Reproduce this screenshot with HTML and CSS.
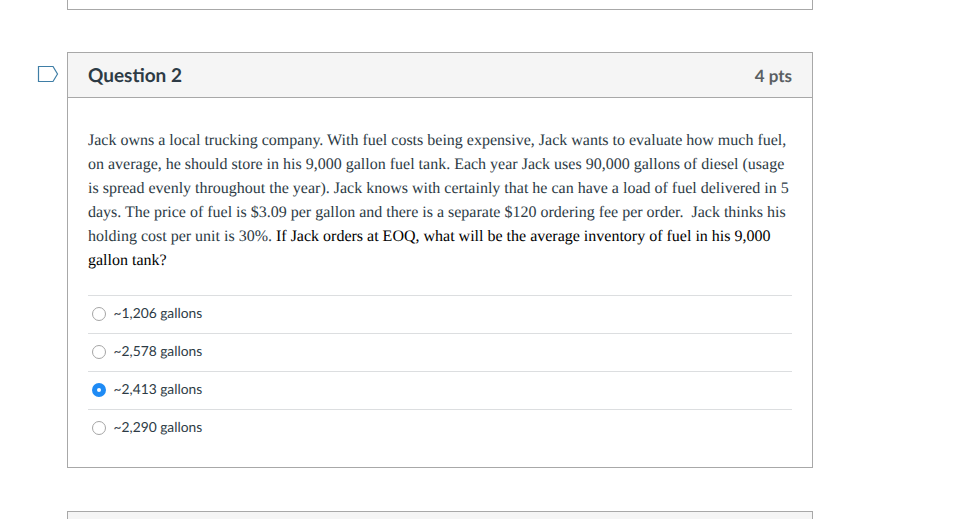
FILE: index.html
```html
<!DOCTYPE html>
<html lang="en">
<head>
  <meta charset="UTF-8" />
  <title>Quiz</title>
  <link rel="stylesheet" href="styles.css">
</head>
<body>
  <div class="quiz">
    <div class="question-row">
      <div class="flag-col"></div>
      <div class="card card-prev"></div>
    </div>

    <div class="question-row">
      <div class="flag-col">
        <svg class="flag" width="22" height="17" viewBox="0 0 22 17">
          <path d="M1.5 .5H16L20.5 8L16 15.5H1.5Z" fill="none" stroke="#3f7ea6" stroke-width="1.2"/>
        </svg>
      </div>
      <div class="card">
        <div class="card-header">
          <h2>Question 2</h2>
          <span class="points">4 pts</span>
        </div>
        <div class="card-body">
          <p class="question-text">Jack owns a local trucking company. With fuel costs being expensive, Jack wants to evaluate how much fuel, on average, he should store in his 9,000 gallon fuel tank. Each year Jack uses 90,000 gallons of diesel (usage is spread evenly throughout the year). Jack knows with certainly that he can have a load of fuel delivered in 5 days. The price of fuel is $3.09 per gallon and there is a separate $120 ordering fee per order.&nbsp; Jack thinks his holding cost per unit is 30%. <span class="ask">If Jack orders at EOQ, what will be the average inventory of fuel in his 9,000 gallon tank?</span></p>
          <div class="answers">
            <div class="answer"><span class="radio"></span><span class="answer-text">~1,206 gallons</span></div>
            <div class="answer"><span class="radio"></span><span class="answer-text">~2,578 gallons</span></div>
            <div class="answer"><span class="radio checked"></span><span class="answer-text">~2,413 gallons</span></div>
            <div class="answer"><span class="radio"></span><span class="answer-text">~2,290 gallons</span></div>
          </div>
        </div>
      </div>
    </div>

    <div class="question-row">
      <div class="flag-col"></div>
      <div class="card card-next"></div>
    </div>
  </div>
</body>
</html>
```

FILE: styles.css
```css
* {
  margin: 0;
  padding: 0;
  box-sizing: border-box;
}

html,
body {
  height: 519px;
  overflow: hidden;
}

body {
  background: #fff;
  font-family: Lato, sans-serif;
  color: #2d3b45;
  text-rendering: geometricPrecision;
}

.quiz {
  display: flex;
  flex-direction: column;
  gap: 42px;
}

.question-row {
  display: flex;
}

.flag-col {
  width: 67px;
  flex-shrink: 0;
  padding-left: 37px;
}

.flag {
  display: block;
  margin-top: 14px;
}

.card {
  width: 746px;
  border: 1px solid #a8a8a8;
}

.card-prev {
  height: 10px;
  border-top: none;
}

.card-next {
  height: 30px;
  margin-top: 1px;
  background: #f5f5f5;
}

.card-header {
  display: flex;
  justify-content: space-between;
  align-items: center;
  height: 45px;
  padding: 0 20px;
  background: #f5f5f5;
  border-bottom: 1px solid #a8a8a8;
}

.card-header h2 {
  font-size: 19px;
  font-weight: 700;
}

.points {
  font-size: 17px;
  font-weight: 700;
  color: #5a5f63;
}

.card-body {
  padding: 31px 20px 20px;
}

.question-text {
  font-family: "Liberation Serif", serif;
  font-size: 16px;
  line-height: 24px;
  margin-bottom: 22px;
}

.ask {
  color: #000;
}

.answer {
  display: flex;
  align-items: center;
  height: 38px;
  padding-left: 4px;
  border-top: 1px solid #dcdee0;
  font-size: 13.8px;
}

.answer-text {
  margin-top: -4px;
}

.radio {
  width: 14px;
  height: 14px;
  margin-top: -1px;
  margin-right: 7.5px;
  border: 1px solid #a5a5a5;
  border-radius: 50%;
  background: #fff;
}

.radio.checked {
  border: 5px solid #1f8bf5;
}
```
